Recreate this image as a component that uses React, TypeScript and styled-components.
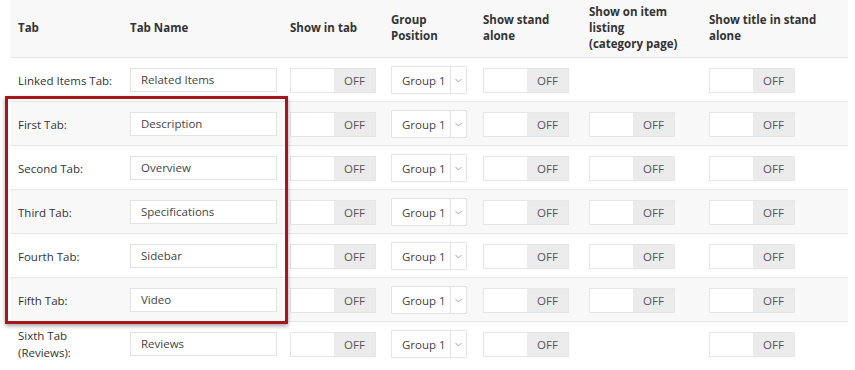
import styled, { createGlobalStyle } from "styled-components";

const GlobalStyle = createGlobalStyle`
  body {
    margin: 0;
    background: #ffffff;
    font-family: "Open Sans", "Liberation Sans", sans-serif;
    color: #333333;
  }
`;

type TabRow = {
  label: string;
  name: string;
  listing: boolean;
};

const rows: TabRow[] = [
  { label: "Linked Items Tab:", name: "Related Items", listing: false },
  { label: "First Tab:", name: "Description", listing: true },
  { label: "Second Tab:", name: "Overview", listing: true },
  { label: "Third Tab:", name: "Specifications", listing: true },
  { label: "Fourth Tab:", name: "Sidebar", listing: true },
  { label: "Fifth Tab:", name: "Video", listing: true },
  { label: "Sixth Tab\n(Reviews):", name: "Reviews", listing: false },
];

const colWidths = [112, 160, 101, 92, 106, 120, 147];

const Page = styled.div`
  position: relative;
  width: 855px;
  height: 370px;
  overflow: hidden;
`;

const Table = styled.table`
  margin-left: 10px;
  width: 838px;
  border-collapse: collapse;
  table-layout: fixed;
  font-size: 11.5px;
`;

const HeadRow = styled.tr`
  background: #f8f8f8;
  height: 57px;
  border-bottom: 1px solid #e6e6e6;
`;

const Th = styled.th`
  text-align: left;
  font-weight: 700;
  font-size: 11.5px;
  line-height: 16px;
  padding: 0 8px;
  vertical-align: middle;
  color: #333333;
`;

const Row = styled.tr<{ $shaded: boolean }>`
  height: 44px;
  background: ${(p) => (p.$shaded ? "#f8f8f8" : "#ffffff")};
  border-bottom: 1px solid #e8e8e8;

  &:last-child {
    border-bottom: none;
  }
`;

const Td = styled.td`
  padding: 2px 8px 0;
  vertical-align: middle;
  line-height: 17px;
  white-space: pre;
`;

const TextInput = styled.div`
  box-sizing: border-box;
  width: 147px;
  height: 24px;
  line-height: 22px;
  padding: 0 10px;
  background: #ffffff;
  border: 1px solid #e4e4e4;
  color: #444444;
  font-size: 11.5px;
`;

const Toggle = styled.div`
  box-sizing: border-box;
  display: flex;
  width: 86px;
  height: 25px;
  border: 1px solid #e6e6e6;
  background: #ffffff;
`;

const ToggleOn = styled.div`
  width: 43px;
  background: #ffffff;
`;

const ToggleOff = styled.div`
  flex: 1;
  background: #ebebeb;
  color: #555555;
  font-size: 11.5px;
  display: flex;
  align-items: center;
  justify-content: center;
`;

const Select = styled.div`
  box-sizing: border-box;
  display: flex;
  width: 76px;
  height: 28px;
  background: #ffffff;
  border: 1px solid #e4e4e4;
`;

const SelectValue = styled.div`
  flex: 1;
  display: flex;
  align-items: center;
  padding-left: 10px;
  color: #444444;
  font-size: 11.5px;
`;

const SelectArrow = styled.div`
  width: 15px;
  border-left: 1px solid #e4e4e4;
  display: flex;
  align-items: center;
  justify-content: center;
`;

const Highlight = styled.div`
  position: absolute;
  left: 5px;
  top: 96px;
  width: 283px;
  height: 228px;
  box-sizing: border-box;
  border: 3px solid #a5161d;
  box-shadow: 0 2px 4px rgba(0, 0, 0, 0.35);
  pointer-events: none;
`;

function OffToggle() {
  return (
    <Toggle>
      <ToggleOn />
      <ToggleOff>OFF</ToggleOff>
    </Toggle>
  );
}

function GroupSelect() {
  return (
    <Select>
      <SelectValue>Group 1</SelectValue>
      <SelectArrow>
        <svg width="7" height="5" viewBox="0 0 7 5">
          <path d="M0.5 1 L3.5 4 L6.5 1" fill="none" stroke="#999" strokeWidth="0.9" />
        </svg>
      </SelectArrow>
    </Select>
  );
}

export default function App() {
  return (
    <Page>
      <GlobalStyle />
      <Table>
        <colgroup>
          {colWidths.map((w, i) => (
            <col key={i} style={{ width: w }} />
          ))}
        </colgroup>
        <thead>
          <HeadRow>
            <Th>Tab</Th>
            <Th>Tab Name</Th>
            <Th>Show in tab</Th>
            <Th>
              Group
              <br />
              Position
            </Th>
            <Th>
              Show stand
              <br />
              alone
            </Th>
            <Th>
              Show on item
              <br />
              listing
              <br />
              (category page)
            </Th>
            <Th>
              Show title in stand
              <br />
              alone
            </Th>
          </HeadRow>
        </thead>
        <tbody>
          {rows.map((r, i) => (
            <Row key={r.label} $shaded={i % 2 === 1}>
              <Td>{r.label}</Td>
              <Td>
                <TextInput>{r.name}</TextInput>
              </Td>
              <Td>
                <OffToggle />
              </Td>
              <Td>
                <GroupSelect />
              </Td>
              <Td>
                <OffToggle />
              </Td>
              <Td>{r.listing && <OffToggle />}</Td>
              <Td>
                <OffToggle />
              </Td>
            </Row>
          ))}
        </tbody>
      </Table>
      <Highlight />
    </Page>
  );
}
